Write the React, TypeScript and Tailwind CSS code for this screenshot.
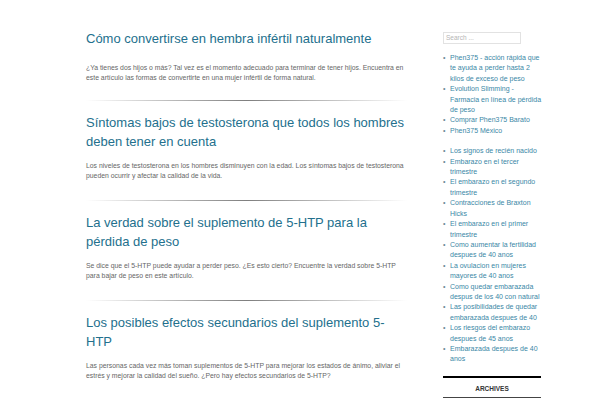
import React from "react";

const posts = [
  {
    title: "Cómo convertirse en hembra infértil naturalmente",
    excerpt:
      "¿Ya tienes dos hijos o más? Tal vez es el momento adecuado para terminar de tener hijos. Encuentra en este artículo las formas de convertirte en una mujer infértil de forma natural.",
  },
  {
    title: "Síntomas bajos de testosterona que todos los hombres deben tener en cuenta",
    excerpt:
      "Los niveles de testosterona en los hombres disminuyen con la edad. Los síntomas bajos de testosterona pueden ocurrir y afectar la calidad de la vida.",
  },
  {
    title: "La verdad sobre el suplemento de 5-HTP para la pérdida de peso",
    excerpt:
      "Se dice que el 5-HTP puede ayudar a perder peso. ¿Es esto cierto? Encuentre la verdad sobre 5-HTP para bajar de peso en este artículo.",
  },
  {
    title: "Los posibles efectos secundarios del suplemento 5-HTP",
    excerpt:
      "Las personas cada vez más toman suplementos de 5-HTP para mejorar los estados de ánimo, aliviar el estrés y mejorar la calidad del sueño. ¿Pero hay efectos secundarios de 5-HTP?",
  },
];

const promoLinks = [
  "Phen375 - acción rápida que te ayuda a perder hasta 2 kilos de exceso de peso",
  "Evolution Slimming - Farmacia en línea de pérdida de peso",
  "Comprar Phen375 Barato",
  "Phen375 México",
];

const recentLinks = [
  "Los signos de recién nacido",
  "Embarazo en el tercer trimestre",
  "El embarazo en el segundo trimestre",
  "Contracciones de Braxton Hicks",
  "El embarazo en el primer trimestre",
  "Como aumentar la fertilidad despues de 40 anos",
  "La ovulacion en mujeres mayores de 40 anos",
  "Como quedar embarazada despus de los 40 con natural",
  "Las posibilidades de quedar embarazada despues de 40",
  "Los riesgos del embarazo despues de 45 anos",
  "Embarazada despues de 40 anos",
];

function LinkList({ items }: { items: string[] }) {
  return (
    <ul className="text-[7px] leading-[10.4px] text-[#3a87a6]">
      {items.map((item) => (
        <li key={item} className="flex">
          <span className="w-[7px] shrink-0 text-[#6b8a96]">•</span>
          <span>{item}</span>
        </li>
      ))}
    </ul>
  );
}

export default function App() {
  return (
    <div
      className="h-[400px] w-[600px] overflow-hidden bg-white"
      style={{ fontFamily: '"Liberation Sans", Arial, sans-serif' }}
    >
      <div className="flex gap-[36px] pl-[86px]">
        {/* posts */}
        <main className="w-[321px] pt-[29px]">
          {posts.map((post, i) => (
            <article key={post.title}>
              {i > 0 && (
                <div className="mb-[12px] h-px bg-gradient-to-r from-transparent via-[#7f7f7f] to-transparent" />
              )}
              <h2 className="text-[13px] leading-[19px] text-[#23708d]">
                {post.title}
              </h2>
              <p
                className={
                  i === 0
                    ? "mt-[15px] mb-[17px] text-[6.85px] leading-[10px] text-[#666]"
                    : "mt-[10px] mb-[19px] text-[6.85px] leading-[10px] text-[#666]"
                }
              >
                {post.excerpt}
              </p>
            </article>
          ))}
        </main>

        {/* sidebar */}
        <aside className="w-[100px] pt-[32px]">
          <div className="mb-[9px] flex h-[12px] w-[78px] items-center border border-[#e2e2e2] px-[2px] text-[6.5px] text-[#b5b5b5]">
            Search ...
          </div>
          <LinkList items={promoLinks} />
          <div className="h-[10px]" />
          <LinkList items={recentLinks} />
          <div className="mt-[11px] w-[98px] border-t-2 border-black pt-[5px] text-center text-[6.5px] font-bold leading-[12px] text-[#333]">
            ARCHIVES
          </div>
          <div className="mt-[2px] h-px w-[98px] bg-[#444]" />
        </aside>
      </div>
    </div>
  );
}
